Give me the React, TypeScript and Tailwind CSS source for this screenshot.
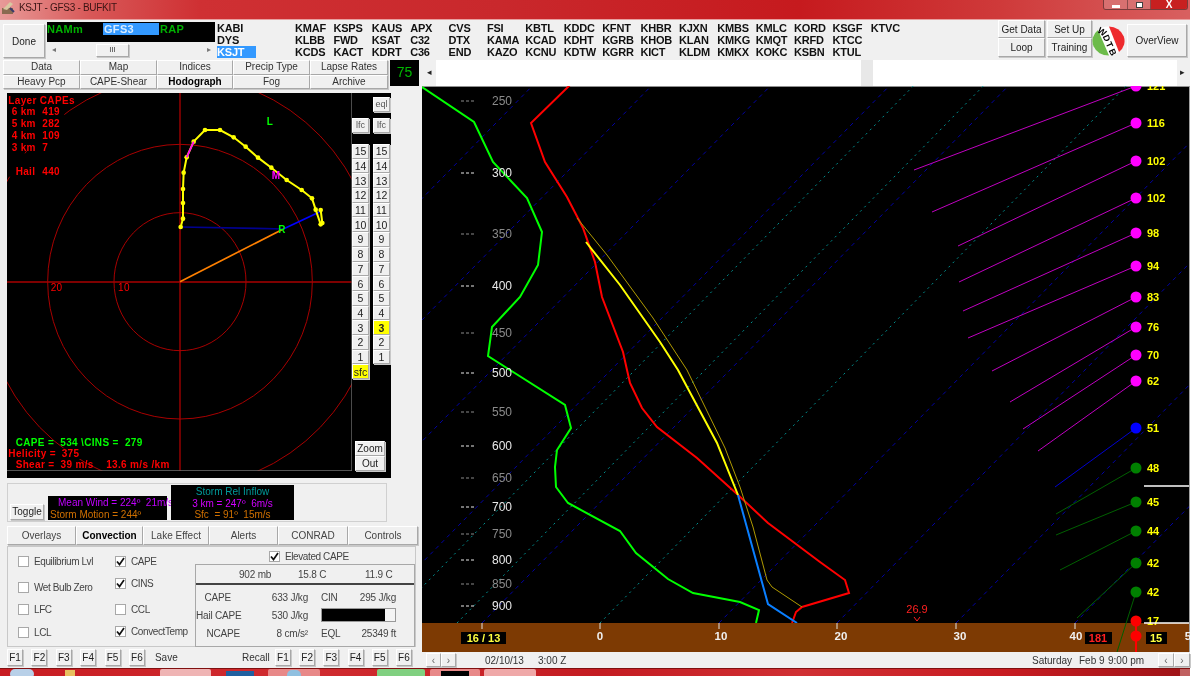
import React from "react";

const raised =
  "bg-[#f0f0f0] border border-t-white border-l-white border-r-[#a8a8a8] border-b-[#a8a8a8] shadow-[1px_1px_0_#c8c8c8] flex items-center justify-center";

const stationRows = [
  ["KABI", "", "KMAF", "KSPS", "KAUS", "APX", "CVS", "FSI", "KBTL", "KDDC", "KFNT", "KHBR", "KJXN", "KMBS", "KMLC", "KORD", "KSGF", "KTVC"],
  ["DYS", "", "KLBB", "FWD", "KSAT", "C32", "DTX", "KAMA", "KCAD", "KDHT", "KGRB", "KHOB", "KLAN", "KMKG", "KMQT", "KRFD", "KTCC", ""],
  ["KSJT", "", "KCDS", "KACT", "KDRT", "C36", "END", "KAZO", "KCNU", "KDTW", "KGRR", "KICT", "KLDM", "KMKX", "KOKC", "KSBN", "KTUL", ""],
];

function Logo() {
  return (
    <svg width="33" height="30" viewBox="0 0 33 30" className="shrink-0">
      <ellipse cx="16.5" cy="15" rx="16" ry="14.5" fill="#fff" />
      <path d="M6 4 A16 14.5 0 0 0 17 29.5 Z" fill="#6cbb4a" />
      <path d="M17 0.5 A16 14.5 0 0 1 27 26 Z" fill="#ee2a2e" />
      <g fontSize="9" fontWeight="bold" fill="#000">
        <text x="6" y="8" transform="rotate(35 9 5)">W</text>
        <text x="12" y="14" transform="rotate(65 14 11)">D</text>
        <text x="15" y="21" transform="rotate(65 17 18)">T</text>
        <text x="18" y="28" transform="rotate(65 20 25)">B</text>
      </g>
    </svg>
  );
}

function TitleBar() {
  return (
    <div className="h-[20px] flex items-start bg-[linear-gradient(90deg,#e89a98_0px,#d85858_90px,#cf3033_200px,#c9282c_500px,#c61a1e_800px,#cf3a3a_1000px,#d86060_1190px)] border-b border-b-[#e8a0a0]">
      <svg width="14" height="14" viewBox="0 0 14 14" className="ml-[1px] mt-[1px] shrink-0">
        <rect x="1" y="7" width="11" height="6" fill="#8a6a50" />
        <path d="M2 8 L9 1 L12 3 L6 9 Z" fill="#d8c8a0" />
        <path d="M9 7 L13 11" stroke="#3a3a6a" strokeWidth="2" />
      </svg>
      <span className="ml-[4px] mt-[2px] text-[10px] leading-[12px] tracking-[-0.3px] text-[#3a1414]">KSJT - GFS3 - BUFKIT</span>
      <div className="ml-auto mr-[2px] flex h-[10px] rounded-b-[3px] border border-t-0 border-[#7a3a3a] overflow-hidden">
        <div className="w-[24px] flex items-center justify-center bg-[#d87070] border-r border-r-[#8a4a4a]">
          <div className="w-[8px] h-[3px] bg-white mt-[3px]" />
        </div>
        <div className="w-[23px] flex items-center justify-center bg-[#d87070] border-r border-r-[#8a4a4a]">
          <div className="w-[7px] h-[6px] border border-[#404040] bg-white" />
        </div>
        <div className="w-[36px] flex items-center justify-center bg-[#c82020]">
          <span className="text-[10px] leading-[8px] font-bold text-white">X</span>
        </div>
      </div>
    </div>
  );
}

function Toolbar() {
  return (
    <div className="h-[40px] flex items-start bg-[#f0f0f0]">
      <div className={`${raised} ml-[3px] mt-[4px] w-[42px] h-[34px] text-[10px] text-[#222]`}>Done</div>
      <div className="ml-[2px] mt-[2px] w-[168px] h-[36px] bg-black flex flex-col shrink-0">
        <div className="h-[20px] flex items-start pt-[1px] text-[11px] leading-[12px] font-bold tracking-[0.3px] text-[#00b000]">
          <span className="w-[56px]">NAMm</span>
          <span className="w-[56px] pl-[1px] bg-[#3399ff] text-[#d8ecff]">GFS3</span>
          <span className="pl-[1px]">RAP</span>
        </div>
        <div className="h-[16px] bg-[#f0f0f0] flex items-center text-[#777] text-[8px]">
          <span className="ml-[5px] w-[44px]">◂</span>
          <div className={`${raised} w-[33px] h-[13px] text-[8px] leading-[8px] text-[#444]`}>III</div>
          <span className="ml-[78px]">▸</span>
        </div>
      </div>
      <div className="ml-[2px] mt-[2px] grid grid-cols-[39px_39px_repeat(16,38.4px)] grid-rows-[12px_12px_12px] text-[11px] leading-[12px] font-bold tracking-[-0.2px] text-[#111] shrink-0">
        {stationRows.flatMap((row, r) =>
          row.map((s, c) => (
            <span key={`${r}-${c}`} className={s === "KSJT" ? "bg-[#3399ff] text-white whitespace-nowrap" : "whitespace-nowrap"}>
              {s}
            </span>
          ))
        )}
      </div>
      <div className="ml-auto flex items-start shrink-0">
        <div className="w-[47px] flex flex-col">
          <div className={`${raised} h-[18px] text-[10px] text-[#222]`}>Get Data</div>
          <div className={`${raised} h-[19px] text-[10px] text-[#222]`}>Loop</div>
        </div>
        <div className="ml-[2px] w-[45px] flex flex-col">
          <div className={`${raised} h-[18px] text-[10px] text-[#222]`}>Set Up</div>
          <div className={`${raised} h-[19px] text-[10px] text-[#222]`}>Training</div>
        </div>
        <div className="mt-[6px]"><Logo /></div>
        <div className={`${raised} mt-[4px] mr-[3px] ml-[2px] w-[60px] h-[33px] text-[10px] text-[#222]`}>OverView</div>
      </div>
    </div>
  );
}

const tabWidths1 = [
  ["Data", "w-[77px]"],
  ["Map", "w-[77px]"],
  ["Indices", "w-[76px]"],
  ["Precip Type", "w-[77px]"],
  ["Lapse Rates", "w-[78px]"],
];
const tabWidths2 = [
  ["Heavy Pcp", "w-[77px]"],
  ["CAPE-Shear", "w-[77px]"],
  ["Hodograph", "w-[76px]"],
  ["Fog", "w-[77px]"],
  ["Archive", "w-[78px]"],
];

function TopTabs() {
  return (
    <div className="h-[29px] flex">
      <div className="ml-[3px] w-[385px] flex flex-col">
        {[tabWidths1, tabWidths2].map((row, i) => (
          <div key={i} className="flex h-[14.5px]">
            {row.map(([t, w]) => (
              <div key={t} className={`${raised} ${w} text-[10px] leading-[12px] text-[#333] ${t === "Hodograph" ? "font-bold text-black" : ""}`}>
                {t}
              </div>
            ))}
          </div>
        ))}
      </div>
      <div className="ml-[2px] w-[29px] h-[26px] bg-black text-[#00b800] text-[14px] leading-[24px] text-center">75</div>
    </div>
  );
}

const hodo: [number, number][] = [
  [542, 426], [549, 401], [549, 354], [549, 312], [551, 263], [560, 217], [581, 170], [615, 135], [660, 135], [701, 157], [737, 185], [774, 218], [814, 248], [860, 285], [905, 315], [936, 340], [947, 374], [962, 418], [967, 414], [962, 375],
];
const toPts = (p: [number, number][]) => p.map((q) => q.join(",")).join(" ");

function HodoCanvas() {
  return (
    <svg width="345" height="378" viewBox="21 24 1035 1134" className="shrink-0">
      <rect x="21" y="24" width="1035" height="1134" fill="#000" />
      <g fill="none" stroke="#a80000" strokeWidth="3">
        <ellipse cx="540" cy="590" rx="198" ry="207" />
        <ellipse cx="540" cy="590" rx="397" ry="412" />
        <ellipse cx="540" cy="590" rx="595" ry="618" />
      </g>
      <g stroke="#a80000" strokeWidth="4">
        <line x1="21" y1="591" x2="1056" y2="591" />
        <line x1="540" y1="24" x2="540" y2="1158" />
      </g>
      <rect x="21" y="30" width="172" height="168" fill="#000" />
      <rect x="25" y="205" width="175" height="70" fill="#000" />
      <rect x="21" y="1090" width="240" height="32" fill="#000" />
      <polyline points="540,590 850,432" stroke="#ff8000" strokeWidth="5" fill="none" />
      <polyline points="542,426 770,430 850,432" stroke="#000090" strokeWidth="5" fill="none" />
      <polyline points="850,432 960,380" stroke="#0000ff" strokeWidth="5" fill="none" />
      <polyline points={toPts(hodo)} stroke="#ffff00" strokeWidth="6" fill="none" />
      {hodo.map(([x, y]) => (
        <circle key={`${x}-${y}`} cx={x} cy={y} r="7" fill="#ffff00" />
      ))}
      <polyline points="560,217 581,170" stroke="#ff00ff" strokeWidth="5" fill="none" />
      <g fontSize="30" fontWeight="bold" letterSpacing="1" fill="#ff0000">
        <text x="25" y="56">Layer CAPEs</text>
        <text x="35" y="91">6 km</text><text x="127" y="91">419</text>
        <text x="35" y="127">5 km</text><text x="127" y="127">282</text>
        <text x="35" y="162">4 km</text><text x="127" y="162">109</text>
        <text x="35" y="197">3 km</text><text x="127" y="197">7</text>
        <text x="47" y="270">Hail</text><text x="127" y="270">440</text>
        <text x="152" y="618" fontWeight="normal">20</text>
        <text x="354" y="618" fontWeight="normal">10</text>
        <text x="25" y="1116">Helicity =</text><text x="185" y="1116">375</text>
        <text x="47" y="1149" xmlSpace="preserve">Shear =  39 m/s    13.6 m/s /km</text>
      </g>
      <g fontSize="30" fontWeight="bold" fill="#00ff00">
        <text x="800" y="120">L</text>
        <text x="835" y="444">R</text>
        <text x="47" y="1082" letterSpacing="1" xmlSpace="preserve">CAPE =  534 \CINS =  279</text>
      </g>
      <text x="815" y="282" fontSize="30" fontWeight="bold" fill="#ff00ff">M</text>
      <path d="M1056 24 V1158 H21" stroke="#707070" strokeWidth="4" fill="none" />
    </svg>
  );
}

const levels = [15, 14, 13, 12, 11, 10, 9, 8, 7, 6, 5, 4, 3, 2, 1];

function HodoButtons() {
  const cell = `${raised} w-[17px] h-[14.7px] text-[10.5px] leading-[12px] text-[#222]`;
  return (
    <div className="w-[39px] flex flex-col bg-black">
      <div className="flex justify-end pr-[1px] mt-[4px]">
        <div className={`${raised} w-[17px] h-[15px] text-[9px] text-[#555]`}>eql</div>
      </div>
      <div className="flex justify-between pr-[1px] mt-[6px]">
        <div className={`${raised} w-[17px] h-[15px] text-[9px] text-[#555]`}>lfc</div>
        <div className={`${raised} w-[17px] h-[15px] text-[9px] text-[#555]`}>lfc</div>
      </div>
      <div className="mt-[11px] grid grid-cols-[21px_17px]">
        {levels.flatMap((n) => [
          <div key={`a${n}`} className={cell}>{n}</div>,
          <div key={`b${n}`} className={n === 3 ? `${cell} !bg-[#ffff00] font-bold` : cell}>{n}</div>,
        ])}
        <div className={`${cell} !bg-[#ffff00]`}>sfc</div>
      </div>
      <div className="mt-auto mb-[7px] ml-[3px] w-[30px]">
        <div className={`${raised} h-[15px] text-[10px] text-[#222]`}>Zoom</div>
        <div className={`${raised} h-[15px] text-[10px] text-[#222]`}>Out</div>
      </div>
    </div>
  );
}

function TogglePanel() {
  return (
    <div className="ml-[7px] mt-[5px] w-[380px] h-[39px] border border-[#d0d0d0] flex items-start text-[10px] leading-[11.5px]">
      <div className={`${raised} ml-[2px] mt-[20px] w-[34px] h-[16px] text-[10px] text-[#222]`}>Toggle</div>
      <div className="ml-[4px] mt-[12px] w-[119px] h-[24px] bg-black pt-[1px] whitespace-nowrap">
        <div className="pl-[10px] text-[#c000ff]">Mean Wind = 224º&nbsp; 21m/s</div>
        <div className="pl-[2px] text-[#d07000]">Storm Motion = 244º</div>
      </div>
      <div className="ml-[4px] mt-[1px] w-[123px] h-[35px] bg-black text-center whitespace-nowrap pt-[1px]">
        <div className="text-[#009a9a]">Storm Rel Inflow</div>
        <div className="text-[#d000ff]">3 km = 247º&nbsp; 6m/s</div>
        <div className="text-[#d07000]">Sfc&nbsp; = 91º&nbsp; 15m/s</div>
      </div>
    </div>
  );
}

const bottomTabs = [
  ["Overlays", "w-[69px]"],
  ["Convection", "w-[67px]"],
  ["Lake Effect", "w-[66px]"],
  ["Alerts", "w-[69px]"],
  ["CONRAD", "w-[70px]"],
  ["Controls", "w-[70px]"],
];

function BottomTabs() {
  return (
    <div className="ml-[7px] mt-[4px] h-[19px] flex">
      {bottomTabs.map(([t, w]) => (
        <div key={t} className={`${raised} ${w} text-[10px] ${t === "Convection" ? "font-bold text-black" : "text-[#444]"}`}>{t}</div>
      ))}
    </div>
  );
}

function Check({ on, label, cls }: { on?: boolean; label: string; cls?: string }) {
  return (
    <div className={`flex items-center h-[14px] whitespace-nowrap text-[10px] tracking-[-0.4px] text-[#444] ${cls ?? ""}`}>
      <span className="w-[11px] h-[11px] bg-white border border-[#a8a8a8] flex items-center justify-center shrink-0">
        {on && (
          <svg width="9" height="9" viewBox="0 0 9 9">
            <path d="M1 4.5 L3.5 7.5 L8 1" stroke="#111" strokeWidth="1.7" fill="none" />
          </svg>
        )}
      </span>
      <span className="ml-[5px]">{label}</span>
    </div>
  );
}

function ConvectionPanel() {
  return (
    <div className="ml-[7px] mt-[1px] w-[409px] h-[101px] border border-[#c8c8c8] flex">
      <div className="w-[187px] flex pl-[10px] pt-[7px]">
        <div className="w-[97px]">
          <Check label="Equilibrium Lvl" />
          <Check label="Wet Bulb Zero" cls="mt-[12px]" />
          <Check label="LFC" cls="mt-[8px]" />
          <Check label="LCL" cls="mt-[9px]" />
        </div>
        <div>
          <Check on label="CAPE" />
          <Check on label="CINS" cls="mt-[8px]" />
          <Check label="CCL" cls="mt-[12px]" />
          <Check on label="ConvectTemp" cls="mt-[8px]" />
        </div>
      </div>
      <div className="flex-1 flex flex-col pt-[2px]">
        <Check on label="Elevated CAPE" cls="ml-[74px]" />
        <div className="mt-[1px] flex-1 -mb-[1px] border border-[#a8a8a8] text-[10px] tracking-[-0.2px] text-[#444] flex flex-col">
          <div className="h-[20px] border-b-2 border-b-[#444] flex items-center whitespace-nowrap">
            <span className="ml-[43px] w-[59px]">902 mb</span>
            <span className="w-[67px]">15.8 C</span>
            <span>11.9 C</span>
          </div>
          <div className="flex-1 grid grid-cols-[44px_68px_13px_75px] grid-rows-[18px_18px_18px] pt-[3px] items-center whitespace-nowrap">
            <span className="text-right pr-[9px]">CAPE</span>
            <span className="text-right">633 J/kg</span>
            <span />
            <span className="flex justify-between"><span>CIN</span><span>295 J/kg</span></span>
            <span className="text-right">Hail CAPE</span>
            <span className="text-right">530 J/kg</span>
            <span />
            <span className="h-[14px] bg-black border border-[#999] flex justify-end"><span className="w-[10px] bg-[#f4f4f4]" /></span>
            <span className="text-right">NCAPE</span>
            <span className="text-right">8 cm/s²</span>
            <span />
            <span className="flex justify-between"><span>EQL</span><span>25349 ft</span></span>
          </div>
        </div>
      </div>
    </div>
  );
}

function FKeys() {
  const f = `${raised} w-[16px] h-[17px] text-[10px] text-[#222]`;
  const keys = ["F1", "F2", "F3", "F4", "F5", "F6"];
  return (
    <div className="ml-[7px] mt-[2px] h-[17px] flex items-center text-[10px] text-[#333]">
      <div className="flex gap-[8.4px]">{keys.map((k) => <div key={k} className={f}>{k}</div>)}</div>
      <span className="ml-[10px] w-[87px]">Save</span>
      <span className="w-[33px]">Recall</span>
      <div className="flex gap-[8.2px]">{keys.map((k) => <div key={k} className={f}>{k}</div>)}</div>
    </div>
  );
}

const pressure: [string, number, boolean][] = [
  ["250", 101, false], ["300", 173, true], ["350", 234, false], ["400", 286, true], ["450", 333, false], ["500", 373, true], ["550", 412, false], ["600", 446, true], ["650", 478, false], ["700", 507, true], ["750", 534, false], ["800", 560, true], ["850", 584, false], ["900", 606, true],
];

const temp: [number, number][] = [[570, 85], [531, 123], [545, 162], [567, 197], [583, 228], [595, 262], [602, 297], [623, 352], [627, 370], [630, 383], [642, 408], [657, 427], [697, 458], [737, 494], [768, 523], [820, 562], [845, 580], [849, 593], [802, 607], [796, 612], [792, 623]];
const dew: [number, number][] = [[422, 87], [474, 122], [493, 162], [527, 198], [542, 232], [538, 265], [520, 297], [492, 327], [488, 356], [510, 370], [565, 405], [571, 428], [557, 450], [555, 467], [556, 487], [568, 503], [620, 531], [636, 553], [668, 579], [693, 593], [740, 602], [759, 610], [756, 623]];
const parcel: [number, number][] = [[586, 242], [620, 285], [660, 342], [678, 370], [717, 443], [738, 495]];
const parcelThin: [number, number][] = [[577, 218], [607, 255], [653, 318], [687, 370], [725, 448], [740, 487], [753, 527], [767, 580], [772, 587], [802, 607]];
const wetBulb: [number, number][] = [[738, 495], [768, 604], [797, 623]];

const blueIso = [6, 125, 244, 363, 482, 719, 837, 956, 1075];
const cyanIso = [387, 457, 600];

const barbs: [string, number, number, number, string, string][] = [
  ["121", 86, 914, 170, "#ff00ff", "#c000c0"],
  ["116", 123, 932, 212, "#ff00ff", "#c000c0"],
  ["102", 161, 958, 246, "#ff00ff", "#c000c0"],
  ["102", 198, 959, 282, "#ff00ff", "#c000c0"],
  ["98", 233, 963, 311, "#ff00ff", "#c000c0"],
  ["94", 266, 968, 338, "#ff00ff", "#c000c0"],
  ["83", 297, 992, 371, "#ff00ff", "#c000c0"],
  ["76", 327, 1010, 402, "#ff00ff", "#c000c0"],
  ["70", 355, 1023, 429, "#ff00ff", "#c000c0"],
  ["62", 381, 1038, 451, "#ff00ff", "#c000c0"],
  ["51", 428, 1055, 487, "#0000ff", "#0000d0"],
  ["48", 468, 1056, 514, "#008000", "#006000"],
  ["45", 502, 1056, 535, "#008000", "#006000"],
  ["44", 531, 1060, 570, "#008000", "#006000"],
  ["42", 563, 1077, 618, "#008000", "#006000"],
  ["42", 592, 1117, 652, "#008000", "#006000"],
];

function SkewT() {
  return (
    <svg width="768" height="566" viewBox="422 86 768 566" className="block shrink-0">
      <rect x="422" y="86" width="767" height="537" fill="#000" />
      <rect x="1189" y="86" width="1" height="566" fill="#a0a0a0" />
      <rect x="422" y="86" width="767" height="1" fill="#909090" />
      <defs>
        <clipPath id="chart"><rect x="422" y="86" width="767" height="537" /></clipPath>
        <clipPath id="all"><rect x="422" y="86" width="767" height="566" /></clipPath>
      </defs>
      <g clipPath="url(#chart)">
        {blueIso.map((x) => (
          <line key={x} x1={x} y1="623" x2={x + 537 * 0.98} y2="86" stroke="#0000b8" strokeWidth="0.9" strokeDasharray="4 4" />
        ))}
        {cyanIso.map((x) => (
          <line key={x} x1={x} y1="623" x2={x + 537 * 0.98} y2="86" stroke="#00a0a0" strokeWidth="0.9" strokeDasharray="2 4" />
        ))}
        <polyline points={toPts(dew)} stroke="#00ff00" strokeWidth="2" fill="none" />
        <polyline points={toPts(temp)} stroke="#ff0000" strokeWidth="2" fill="none" />
        <polyline points={toPts(parcelThin)} stroke="#b09a00" strokeWidth="1" fill="none" />
        <polyline points={toPts(parcel)} stroke="#ffff00" strokeWidth="2" fill="none" />
        <polyline points={toPts(wetBulb)} stroke="#0a7fff" strokeWidth="2" fill="none" />
      </g>
      {pressure.map(([p, y, w]) => (
        <g key={p} fill={w ? "#e8e8e8" : "#8a8a8a"}>
          <text x="492" y={y + 4} fontSize="12">{p}</text>
          <line x1="461" y1={y} x2="474" y2={y} stroke={w ? "#e8e8e8" : "#8a8a8a"} strokeDasharray="3 2" />
        </g>
      ))}
      <rect x="422" y="623" width="767" height="29" fill="#7d3a03" />
      <g clipPath="url(#all)">
        {barbs.map(([v, y, ex, ey, dot, line]) => (
          <g key={`${v}-${y}`}>
            <line x1="1136" y1={y} x2={ex} y2={ey} stroke={line} strokeWidth="1" />
            <circle cx="1136" cy={y} r="5.5" fill={dot} />
            <text x="1147" y={y + 4} fontSize="11" fontWeight="bold" fill="#ffff00">{v}</text>
          </g>
        ))}
        <line x1="1136" y1="621" x2="1136" y2="652" stroke="#ff0000" strokeWidth="2" />
        <circle cx="1136" cy="621" r="5.5" fill="#ff0000" />
        <circle cx="1136" cy="636" r="5.5" fill="#ff0000" />
        <text x="1147" y="625" fontSize="11" fontWeight="bold" fill="#ffff00">17</text>
      </g>
      <line x1="1144" y1="486" x2="1189" y2="486" stroke="#fff" strokeWidth="1.5" />
      <line x1="1144" y1="623" x2="1189" y2="623" stroke="#fff" strokeWidth="1.5" />
      {[482, 600, 719, 837, 956, 1075].map((x) => (
        <line key={x} x1={x} y1="623" x2={x} y2="629" stroke="#e0e0e0" />
      ))}
      <g fontSize="11.5" fontWeight="bold" fill="#f0f0f0" textAnchor="middle">
        <text x="600" y="640">0</text>
        <text x="721" y="640">10</text>
        <text x="841" y="640">20</text>
        <text x="960" y="640">30</text>
        <text x="1076" y="640">40</text>
        <text x="1188" y="640">5</text>
      </g>
      <rect x="461" y="632" width="45" height="12" fill="#000" />
      <text x="483.5" y="642" fontSize="11" fontWeight="bold" fill="#ffff40" textAnchor="middle">16 / 13</text>
      <rect x="1085" y="632" width="27" height="12" fill="#000" />
      <text x="1098" y="642" fontSize="11" fontWeight="bold" fill="#ff2020" textAnchor="middle">181</text>
      <rect x="1146" y="632" width="21" height="12" fill="#000" />
      <text x="1156" y="642" fontSize="11" fontWeight="bold" fill="#ffff40" textAnchor="middle">15</text>
      <text x="917" y="613" fontSize="11" fill="#ff2020" textAnchor="middle">26.9</text>
      <path d="M914 617 L917 621 L920 617" stroke="#ff2020" fill="none" />
    </svg>
  );
}

function RightColumn() {
  return (
    <div className="ml-auto w-[768px] flex flex-col">
      <div className="h-[26px] flex">
        <div className="w-[14px] flex items-center justify-center text-[9px] text-[#222]">◂</div>
        <div className="w-[425px] bg-white" />
        <div className="w-[12px] bg-[#e8e8e8]" />
        <div className="w-[304px] bg-white" />
        <div className="w-[10px] flex items-center justify-center text-[9px] text-[#222]">▸</div>
      </div>
      <SkewT />
      <div className="h-[16px] flex items-center text-[10px] text-[#333] whitespace-nowrap">
        <div className="ml-[4px] flex text-[#666]">
          <div className={`${raised} w-[15px] h-[14px]`}>‹</div>
          <div className={`${raised} w-[15px] h-[14px]`}>›</div>
        </div>
        <span className="ml-[29px] w-[53px]">02/10/13</span>
        <span>3:00 Z</span>
        <span className="ml-auto w-[47px]">Saturday</span>
        <span className="w-[29px]">Feb 9</span>
        <span className="w-[50px]">9:00 pm</span>
        <div className="flex text-[#666]">
          <div className={`${raised} w-[16px] h-[14px]`}>‹</div>
          <div className={`${raised} w-[16px] h-[14px]`}>›</div>
        </div>
      </div>
    </div>
  );
}

function Taskbar() {
  return (
    <div className="h-[8px] flex overflow-hidden border-t border-t-[#801010] bg-[linear-gradient(90deg,#c81c22,#d02c30_300px,#c41c22_600px,#d03034_800px,#c81c22_1000px,#a01418_1180px)]">
      <div className="ml-[10px] w-[24px] h-[10px] rounded-full bg-[#b8d0e8]" />
      <div className="ml-[31px] w-[10px] h-[7px] mt-[1px] bg-[#e8c060]" />
      <div className="ml-[85px] w-[51px] bg-[#efb4b4] rounded-t-[2px]" />
      <div className="ml-[15px] w-[28px] mt-[2px] bg-[#2060a0]" />
      <div className="ml-[14px] w-[52px] bg-[#e88888] rounded-t-[2px] flex justify-center">
        <div className="w-[14px] h-[10px] mt-[1px] rounded-full bg-[#90c0e0]" />
      </div>
      <div className="ml-[57px] w-[48px] bg-[#80d080] rounded-t-[2px]" />
      <div className="ml-[5px] w-[50px] bg-[#e88888] rounded-t-[2px] flex justify-center">
        <div className="w-[28px] h-[5px] mt-[2px] bg-black" />
      </div>
      <div className="ml-[4px] w-[52px] bg-[#efa8a8] rounded-t-[2px]" />
      <div className="ml-auto w-[10px] bg-[#c06060]" />
    </div>
  );
}

export default function App() {
  return (
    <div className="w-[1200px] h-[682px] bg-white overflow-hidden font-['Liberation_Sans',sans-serif] blur-[0.4px]">
      <div className="w-[1190px] flex flex-col">
        <TitleBar />
        <Toolbar />
        <div className="h-[608px] flex bg-[#f0f0f0]">
          <div className="w-[420px] flex flex-col">
            <TopTabs />
            <div className="ml-[7px] mt-[4px] w-[384px] h-[385px] bg-black flex">
              <HodoCanvas />
              <HodoButtons />
            </div>
            <TogglePanel />
            <BottomTabs />
            <ConvectionPanel />
            <FKeys />
          </div>
          <RightColumn />
        </div>
        <Taskbar />
      </div>
    </div>
  );
}
